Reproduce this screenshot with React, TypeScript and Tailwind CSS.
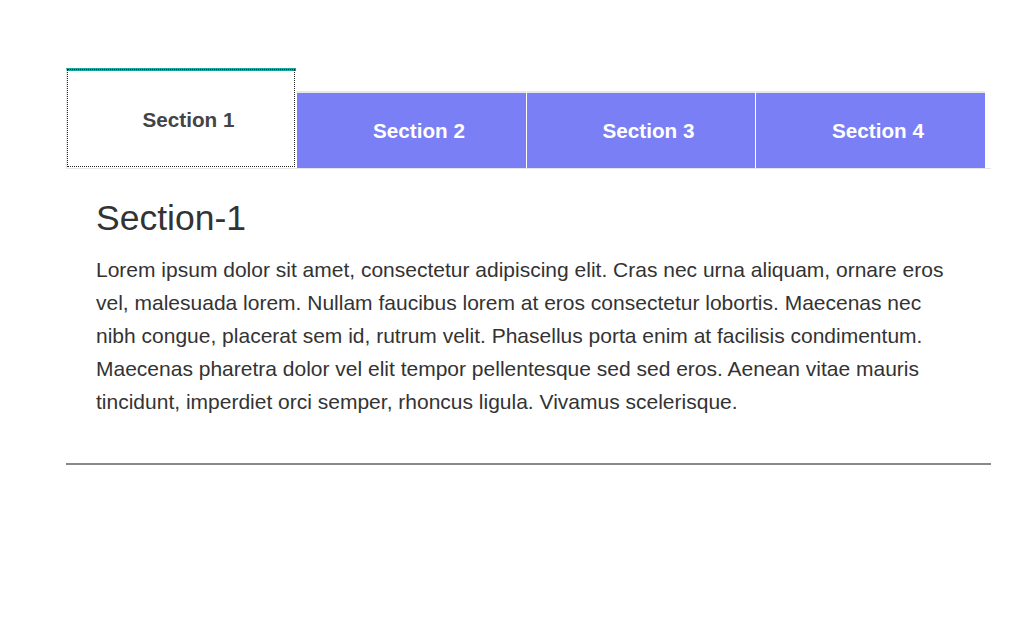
import React, { useState } from "react";

const tabs = ["Section 1", "Section 2", "Section 3", "Section 4"];
const widths = ["w-[229px]", "w-[229px]", "w-[228px]", "w-[229px]"];

const body =
  "Lorem ipsum dolor sit amet, consectetur adipiscing elit. Cras nec urna aliquam, ornare eros vel, malesuada lorem. Nullam faucibus lorem at eros consectetur lobortis. Maecenas nec nibh congue, placerat sem id, rutrum velit. Phasellus porta enim at facilisis condimentum. Maecenas pharetra dolor vel elit tempor pellentesque sed sed eros. Aenean vitae mauris tincidunt, imperdiet orci semper, rhoncus ligula. Vivamus scelerisque.";

export default function App() {
  const [active, setActive] = useState(0);

  return (
    <div
      className="min-h-[636px] bg-white pt-[68px] pl-[66px] pr-[35px]"
      style={{ fontFamily: '"Liberation Sans", Arial, sans-serif' }}
    >
      <div className="w-[925px]">
        <div className="flex items-end border-b border-[#e6e6e6]">
          {tabs.map((t, i) =>
            i === active ? (
              <button
                key={t}
                onClick={() => setActive(i)}
                className="h-[100px] w-[230px] border-t-[3px] border-l border-t-[#17a79e] border-l-[#e8e8e8] bg-white pl-[14px] text-[20.7px] font-bold text-[#444] outline-1 outline-dotted outline-[#222] -outline-offset-2"
              >
                {t}
              </button>
            ) : (
              <button
                key={t}
                onClick={() => setActive(i)}
                className={`ml-px h-[77px] ${widths[i]} border-t-2 border-[#e8e8e8] bg-[#7a7ff5] pl-[15px] text-[20.7px] font-bold text-white`}
              >
                {t}
              </button>
            )
          )}
        </div>

        <div className="px-[30px] pt-[29px] pb-[45px] text-[#333]">
          <h2 className="text-[35.5px] leading-[40px]">Section-{active + 1}</h2>
          <p className="mt-[15px] text-[21px] leading-[33px]">{body}</p>
        </div>

        <div className="border-t-2 border-t-[#888]" />
      </div>
    </div>
  );
}
